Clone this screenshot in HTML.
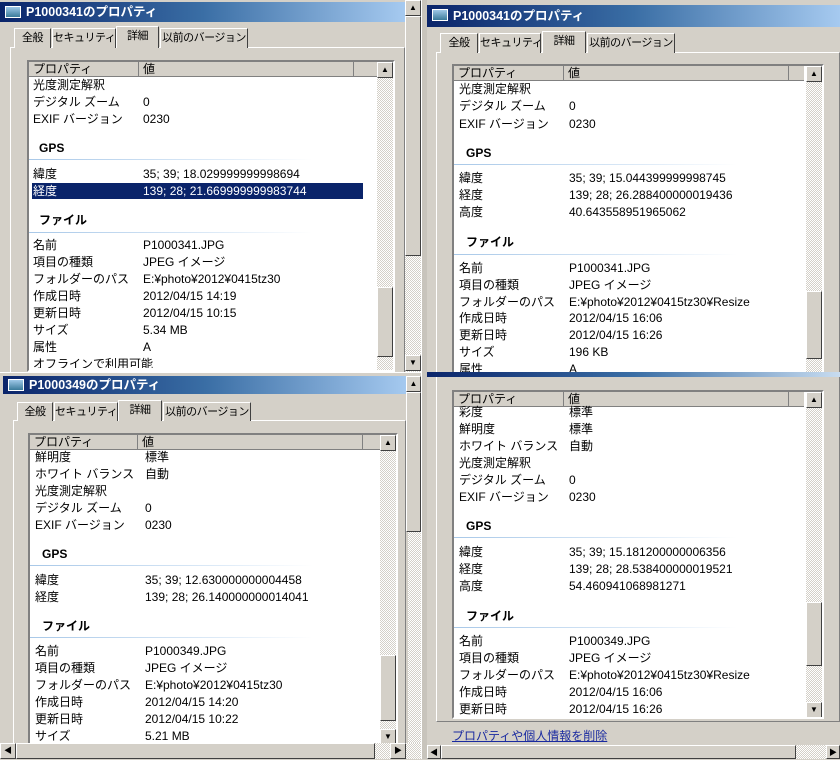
<!DOCTYPE html>
<html><head><meta charset="utf-8"><style>
*{margin:0;padding:0;box-sizing:border-box}
body{width:840px;height:759px;overflow:hidden;background:#d4d0c8;font-family:"Liberation Sans","Noto Sans CJK JP",sans-serif;font-size:12px;color:#000;position:relative}
div,span{position:absolute}
.t{height:20px;background:linear-gradient(90deg,#0a246a,#3a6ea5 50%,#a6caf0);color:#fff;font-weight:bold;font-size:12.5px;line-height:20px;padding-left:26px;white-space:nowrap}
.ic{left:5px;top:4px;width:16px;height:12px;background:linear-gradient(#9ec8e8,#3a7a9a);border:1px solid #fff}
.tab{height:20px;border:1px solid #fff;border-right-color:#404040;border-bottom:none;line-height:18px;text-align:center;font-size:11px;letter-spacing:-0.5px;background:#d4d0c8;white-space:nowrap;overflow:hidden}
.sel{z-index:2}
.pn{border:1px solid #fff;border-right-color:#808080;border-bottom-color:#808080}
.lb{background:#fff;border:2px solid;border-color:#808080 #fff #fff #808080;overflow:hidden}
.hd{left:0;height:15px;background:#d4d0c8;border-bottom:1px solid #808080;line-height:14px;font-size:12px}
.hd span{top:0;border-right:1px solid #808080;height:15px;padding-left:4px}
.sb{background:repeating-conic-gradient(#d4d0c8 0 25%,#fff 0 50%) 0 0/2px 2px}
.th{background:#d4d0c8;border:1px solid;border-color:#fff #404040 #404040 #fff}
.ar{background:#d4d0c8;border:1px solid;border-color:#fff #404040 #404040 #fff;width:16px;height:16px;font-size:8px;line-height:14px;text-align:center}
.r{height:16px;line-height:16px;white-space:nowrap;width:340px}
.r span{top:0}
.h{font-weight:bold;font-size:12px}
.ln{height:1px;background:linear-gradient(90deg,#a8c8e8,#e0ecf8 70%,#fff)}
.sl{background:#0a246a;color:#fff}
</style></head><body>

<!-- ===== TOP LEFT ===== -->
<div class="t" style="left:0;top:2px;width:405px"><div class="ic"></div>P1000341のプロパティ</div>
<div class="sb" style="left:405px;top:0;width:16px;height:372px"></div>
<div class="ar" style="left:405px;top:0">▲</div>
<div class="th" style="left:405px;top:16px;width:16px;height:240px"></div>
<div class="ar" style="left:405px;top:355px">▼</div>
<div style="left:421px;top:0;width:6px;height:759px;background:#c8c4bc;border-left:1px solid #fff"></div>
<div class="pn" style="left:10px;top:47px;width:395px;height:330px"></div>
<div class="tab" style="left:14px;top:28px;width:37px">全般</div>
<div class="tab" style="left:52px;top:28px;width:64px">セキュリティ</div>
<div class="tab sel" style="left:116px;top:26px;width:43px;height:22px">詳細</div>
<div class="tab" style="left:160px;top:28px;width:88px">以前のバージョン</div>
<div class="lb" style="left:27px;top:60px;width:368px;height:312px">
 <div class="hd" style="top:0;width:350px"><span style="left:0;width:110px">プロパティ</span><span style="left:110px;width:215px">値</span></div>
 <div class="sb" style="left:348px;top:0;width:16px;height:310px"></div>
 <div class="ar" style="left:348px;top:0">▲</div>
 <div class="th" style="left:348px;top:225px;width:16px;height:70px"></div>
</div>
<div class="r" style="left:33px;top:77px"><span style="left:0">光度測定解釈</span></div>
<div class="r" style="left:33px;top:94px"><span style="left:0">デジタル ズーム</span><span style="left:110px">0</span></div>
<div class="r" style="left:33px;top:111px"><span style="left:0">EXIF バージョン</span><span style="left:110px">0230</span></div>
<div class="r h" style="left:39px;top:140px"><span style="left:0">GPS</span></div>
<div class="ln" style="left:29px;top:159px;width:283px"></div>
<div class="r" style="left:33px;top:166px"><span style="left:0">緯度</span><span style="left:110px">35; 39; 18.029999999998694</span></div>
<div class="r sl" style="left:32px;top:183px;width:331px"><span style="left:1px">経度</span><span style="left:111px">139; 28; 21.669999999983744</span></div>
<div class="r h" style="left:39px;top:212px"><span style="left:0">ファイル</span></div>
<div class="ln" style="left:29px;top:232px;width:283px"></div>
<div class="r" style="left:33px;top:237px"><span style="left:0">名前</span><span style="left:110px">P1000341.JPG</span></div>
<div class="r" style="left:33px;top:254px"><span style="left:0">項目の種類</span><span style="left:110px">JPEG イメージ</span></div>
<div class="r" style="left:33px;top:271px"><span style="left:0">フォルダーのパス</span><span style="left:110px">E:¥photo¥2012¥0415tz30</span></div>
<div class="r" style="left:33px;top:288px"><span style="left:0">作成日時</span><span style="left:110px">2012/04/15 14:19</span></div>
<div class="r" style="left:33px;top:305px"><span style="left:0">更新日時</span><span style="left:110px">2012/04/15 10:15</span></div>
<div class="r" style="left:33px;top:322px"><span style="left:0">サイズ</span><span style="left:110px">5.34 MB</span></div>
<div class="r" style="left:33px;top:339px"><span style="left:0">属性</span><span style="left:110px">A</span></div>
<div class="r" style="left:33px;top:356px;height:12px;overflow:hidden"><span style="left:0">オフラインで利用可能</span></div>

<!-- ===== TOP RIGHT ===== -->
<div class="t" style="left:427px;top:5px;width:413px;height:22px;line-height:22px"><div class="ic"></div>P1000341のプロパティ</div>
<div class="pn" style="left:436px;top:52px;width:404px;height:330px"></div>
<div class="tab" style="left:440px;top:33px;width:38px">全般</div>
<div class="tab" style="left:479px;top:33px;width:62px">セキュリティ</div>
<div class="tab sel" style="left:542px;top:31px;width:44px;height:22px">詳細</div>
<div class="tab" style="left:587px;top:33px;width:88px">以前のバージョン</div>
<div class="lb" style="left:452px;top:64px;width:372px;height:312px">
 <div class="hd" style="top:0;width:350px"><span style="left:0;width:110px">プロパティ</span><span style="left:110px;width:225px">値</span></div>
 <div class="sb" style="left:352px;top:0;width:16px;height:310px"></div>
 <div class="ar" style="left:352px;top:0">▲</div>
 <div class="th" style="left:352px;top:225px;width:16px;height:68px"></div>
</div>
<div class="r" style="left:459px;top:81px"><span style="left:0">光度測定解釈</span></div>
<div class="r" style="left:459px;top:98px"><span style="left:0">デジタル ズーム</span><span style="left:110px">0</span></div>
<div class="r" style="left:459px;top:116px"><span style="left:0">EXIF バージョン</span><span style="left:110px">0230</span></div>
<div class="r h" style="left:466px;top:145px"><span style="left:0">GPS</span></div>
<div class="ln" style="left:454px;top:164px;width:283px"></div>
<div class="r" style="left:459px;top:170px"><span style="left:0">緯度</span><span style="left:110px">35; 39; 15.044399999998745</span></div>
<div class="r" style="left:459px;top:187px"><span style="left:0">経度</span><span style="left:110px">139; 28; 26.288400000019436</span></div>
<div class="r" style="left:459px;top:204px"><span style="left:0">高度</span><span style="left:110px">40.643558951965062</span></div>
<div class="r h" style="left:466px;top:234px"><span style="left:0">ファイル</span></div>
<div class="ln" style="left:454px;top:254px;width:283px"></div>
<div class="r" style="left:459px;top:260px"><span style="left:0">名前</span><span style="left:110px">P1000341.JPG</span></div>
<div class="r" style="left:459px;top:277px"><span style="left:0">項目の種類</span><span style="left:110px">JPEG イメージ</span></div>
<div class="r" style="left:459px;top:294px"><span style="left:0">フォルダーのパス</span><span style="left:110px">E:¥photo¥2012¥0415tz30¥Resize</span></div>
<div class="r" style="left:459px;top:310px"><span style="left:0">作成日時</span><span style="left:110px">2012/04/15 16:06</span></div>
<div class="r" style="left:459px;top:327px"><span style="left:0">更新日時</span><span style="left:110px">2012/04/15 16:26</span></div>
<div class="r" style="left:459px;top:344px"><span style="left:0">サイズ</span><span style="left:110px">196 KB</span></div>
<div class="r" style="left:459px;top:361px;height:12px;overflow:hidden"><span style="left:0">属性</span><span style="left:110px">A</span></div>

<!-- ===== BOTTOM RIGHT ===== -->
<div style="left:427px;top:372px;width:413px;height:387px;background:#d4d0c8"></div>
<div style="left:427px;top:372px;width:413px;height:5px;background:linear-gradient(90deg,#0a246a,#3a6ea5 50%,#c8dcf0)"></div>
<div class="pn" style="left:436px;top:377px;width:404px;height:345px;border-top:none"></div>
<div class="lb" style="left:452px;top:390px;width:372px;height:329px">
 <div class="hd" style="top:0;width:350px"><span style="left:0;width:110px">プロパティ</span><span style="left:110px;width:225px">値</span></div>
 <div class="sb" style="left:352px;top:0;width:16px;height:327px"></div>
 <div class="ar" style="left:352px;top:0">▲</div>
 <div class="th" style="left:352px;top:210px;width:16px;height:64px"></div>
 <div class="ar" style="left:352px;top:310px">▼</div>
</div>
<div class="r" style="left:459px;top:404px"><span style="left:0">彩度</span><span style="left:110px">標準</span></div>
<div class="r" style="left:459px;top:421px"><span style="left:0">鮮明度</span><span style="left:110px">標準</span></div>
<div class="r" style="left:459px;top:438px"><span style="left:0">ホワイト バランス</span><span style="left:110px">自動</span></div>
<div class="r" style="left:459px;top:455px"><span style="left:0">光度測定解釈</span></div>
<div class="r" style="left:459px;top:472px"><span style="left:0">デジタル ズーム</span><span style="left:110px">0</span></div>
<div class="r" style="left:459px;top:489px"><span style="left:0">EXIF バージョン</span><span style="left:110px">0230</span></div>
<div class="r h" style="left:466px;top:518px"><span style="left:0">GPS</span></div>
<div class="ln" style="left:454px;top:537px;width:283px"></div>
<div class="r" style="left:459px;top:544px"><span style="left:0">緯度</span><span style="left:110px">35; 39; 15.181200000006356</span></div>
<div class="r" style="left:459px;top:561px"><span style="left:0">経度</span><span style="left:110px">139; 28; 28.538400000019521</span></div>
<div class="r" style="left:459px;top:578px"><span style="left:0">高度</span><span style="left:110px">54.460941068981271</span></div>
<div class="r h" style="left:466px;top:608px"><span style="left:0">ファイル</span></div>
<div class="ln" style="left:454px;top:627px;width:283px"></div>
<div class="r" style="left:459px;top:633px"><span style="left:0">名前</span><span style="left:110px">P1000349.JPG</span></div>
<div class="r" style="left:459px;top:650px"><span style="left:0">項目の種類</span><span style="left:110px">JPEG イメージ</span></div>
<div class="r" style="left:459px;top:667px"><span style="left:0">フォルダーのパス</span><span style="left:110px">E:¥photo¥2012¥0415tz30¥Resize</span></div>
<div class="r" style="left:459px;top:684px"><span style="left:0">作成日時</span><span style="left:110px">2012/04/15 16:06</span></div>
<div class="r" style="left:459px;top:701px"><span style="left:0">更新日時</span><span style="left:110px">2012/04/15 16:26</span></div>
<div style="left:452px;top:727px;color:#1a2aa0;text-decoration:underline;font-size:12px;white-space:nowrap">プロパティや個人情報を削除</div>
<div class="sb" style="left:427px;top:745px;width:413px;height:14px"></div>
<div class="ar" style="left:427px;top:745px;height:14px;width:14px">◀</div>
<div class="th" style="left:441px;top:745px;width:355px;height:14px"></div>
<div class="ar" style="left:826px;top:745px;height:14px;width:14px">▶</div>

<!-- ===== BOTTOM LEFT ===== -->
<div style="left:0;top:372px;width:421px;height:387px;background:#d4d0c8;border-top:1px solid #fff"></div>
<div class="t" style="left:3px;top:376px;width:405px;height:18px;line-height:18px"><div class="ic" style="top:3px"></div>P1000349のプロパティ</div>
<div class="sb" style="left:408px;top:376px;width:13px;height:368px"></div>
<div class="ar" style="left:406px;top:376px;width:15px">▲</div>
<div class="th" style="left:406px;top:392px;width:15px;height:140px"></div>
<div class="pn" style="left:13px;top:420px;width:393px;height:330px"></div>
<div class="tab" style="left:17px;top:402px;width:36px;height:19px">全般</div>
<div class="tab" style="left:54px;top:402px;width:64px;height:19px">セキュリティ</div>
<div class="tab sel" style="left:118px;top:400px;width:44px;height:21px">詳細</div>
<div class="tab" style="left:163px;top:402px;width:88px;height:19px">以前のバージョン</div>
<div class="lb" style="left:28px;top:433px;width:370px;height:326px;border-bottom:none">
 <div class="hd" style="top:0;width:350px"><span style="left:0;width:108px">プロパティ</span><span style="left:108px;width:225px">値</span></div>
 <div class="sb" style="left:350px;top:0;width:16px;height:326px"></div>
 <div class="ar" style="left:350px;top:0">▲</div>
 <div class="th" style="left:350px;top:220px;width:16px;height:66px"></div>
 <div class="ar" style="left:350px;top:294px">▼</div>
</div>
<div class="r" style="left:35px;top:449px"><span style="left:0">鮮明度</span><span style="left:110px">標準</span></div>
<div class="r" style="left:35px;top:466px"><span style="left:0">ホワイト バランス</span><span style="left:110px">自動</span></div>
<div class="r" style="left:35px;top:483px"><span style="left:0">光度測定解釈</span></div>
<div class="r" style="left:35px;top:500px"><span style="left:0">デジタル ズーム</span><span style="left:110px">0</span></div>
<div class="r" style="left:35px;top:517px"><span style="left:0">EXIF バージョン</span><span style="left:110px">0230</span></div>
<div class="r h" style="left:42px;top:546px"><span style="left:0">GPS</span></div>
<div class="ln" style="left:30px;top:565px;width:283px"></div>
<div class="r" style="left:35px;top:572px"><span style="left:0">緯度</span><span style="left:110px">35; 39; 12.630000000004458</span></div>
<div class="r" style="left:35px;top:589px"><span style="left:0">経度</span><span style="left:110px">139; 28; 26.140000000014041</span></div>
<div class="r h" style="left:42px;top:618px"><span style="left:0">ファイル</span></div>
<div class="ln" style="left:30px;top:637px;width:283px"></div>
<div class="r" style="left:35px;top:643px"><span style="left:0">名前</span><span style="left:110px">P1000349.JPG</span></div>
<div class="r" style="left:35px;top:660px"><span style="left:0">項目の種類</span><span style="left:110px">JPEG イメージ</span></div>
<div class="r" style="left:35px;top:677px"><span style="left:0">フォルダーのパス</span><span style="left:110px">E:¥photo¥2012¥0415tz30</span></div>
<div class="r" style="left:35px;top:694px"><span style="left:0">作成日時</span><span style="left:110px">2012/04/15 14:20</span></div>
<div class="r" style="left:35px;top:711px"><span style="left:0">更新日時</span><span style="left:110px">2012/04/15 10:22</span></div>
<div class="r" style="left:35px;top:728px;height:15px;overflow:hidden"><span style="left:0">サイズ</span><span style="left:110px">5.21 MB</span></div>
<div class="sb" style="left:0;top:743px;width:421px;height:16px"></div>
<div class="ar" style="left:0;top:743px">◀</div>
<div class="th" style="left:16px;top:743px;width:359px;height:16px"></div>
<div class="ar" style="left:390px;top:743px">▶</div>
</body></html>
